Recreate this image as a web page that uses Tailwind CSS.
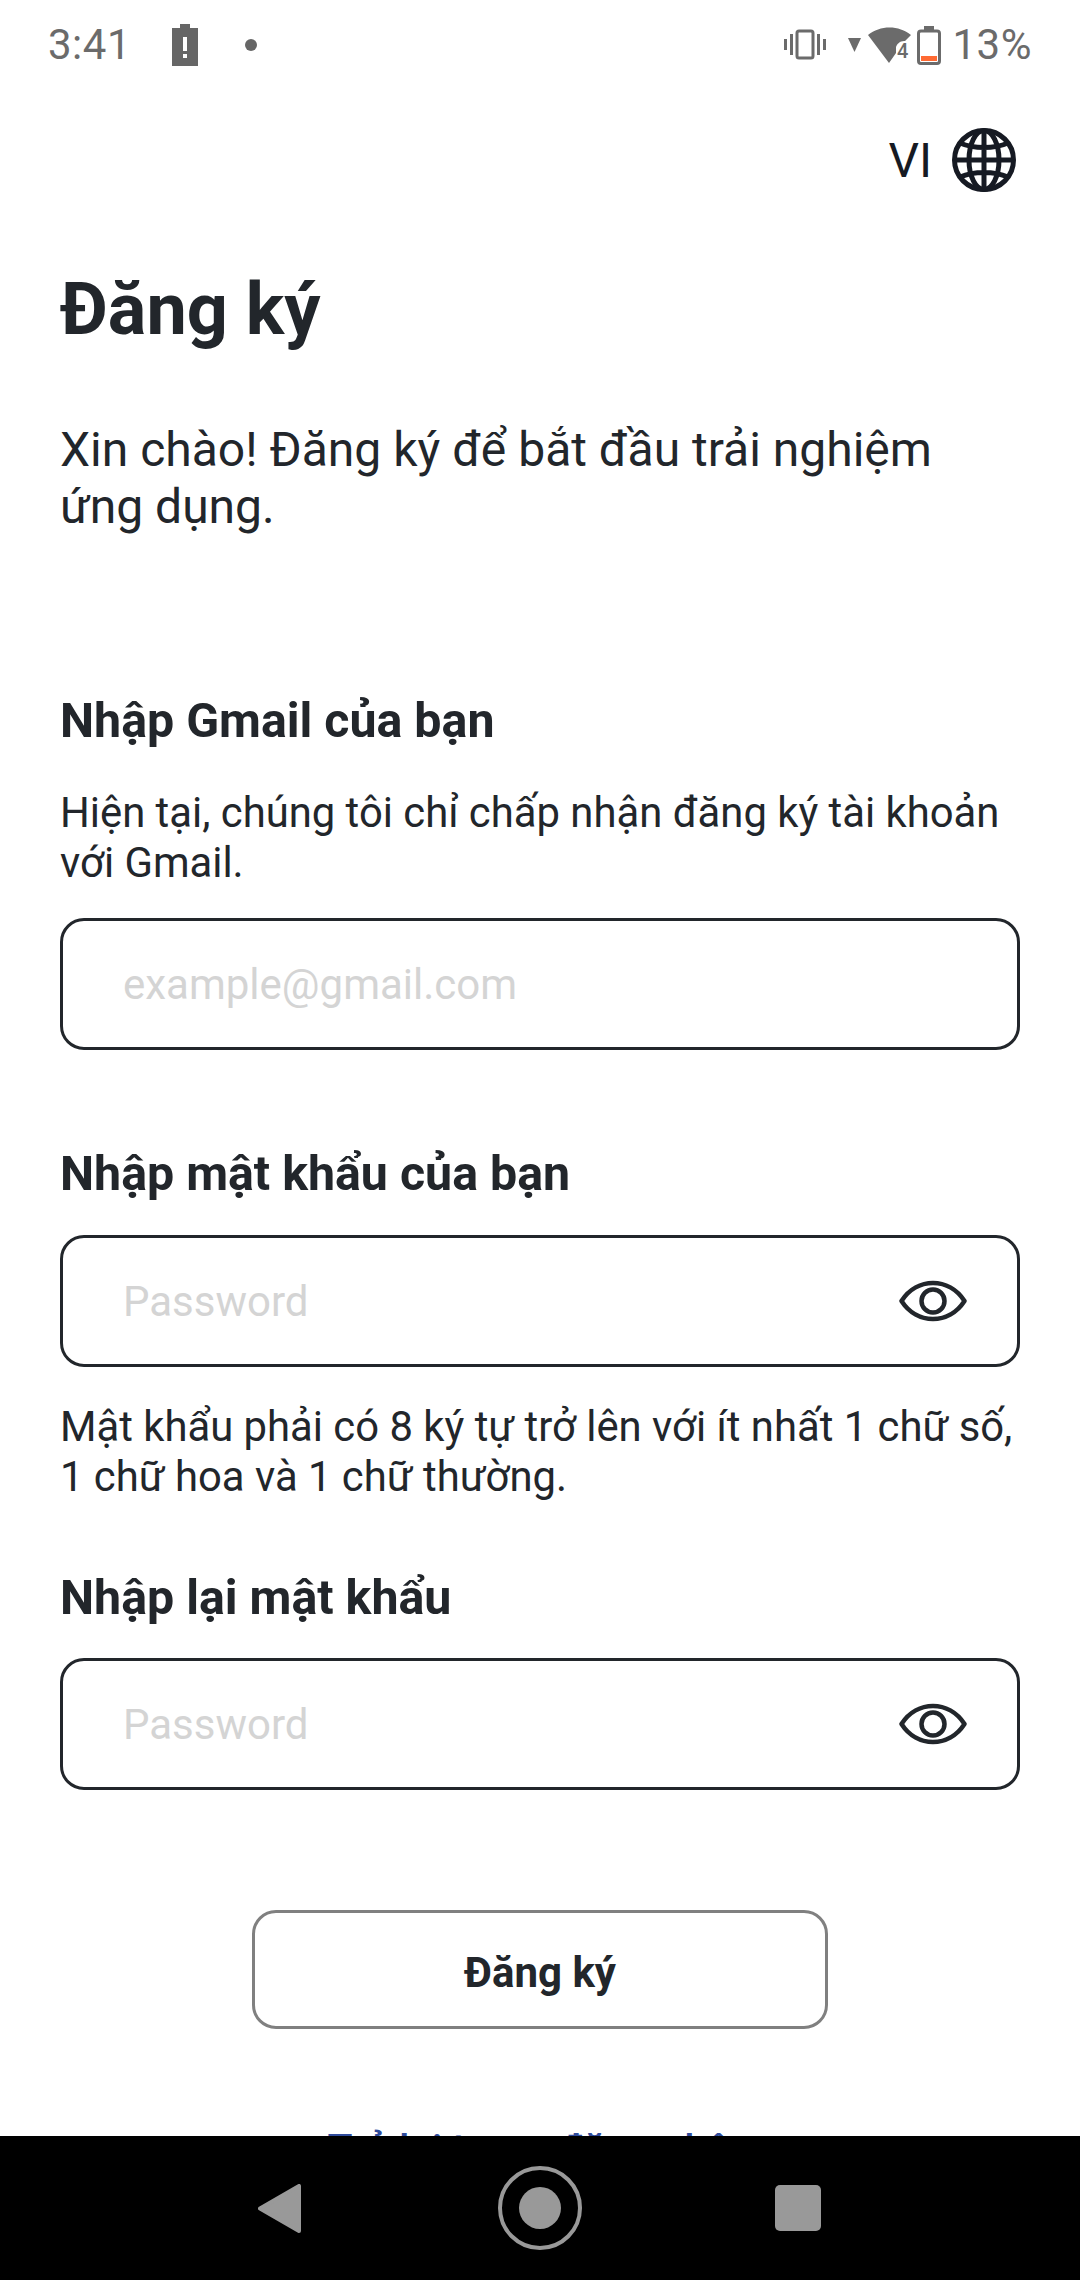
<!doctype html>
<html>
<head>
<meta charset="utf-8">
<title>Đăng ký</title>
<script src="https://cdn.jsdelivr.net/npm/@tailwindcss/browser@4"></script>
</head>
<body class="bg-white">
<div class="w-[1080px] h-[2280px] flex flex-col overflow-hidden font-['Roboto',sans-serif] text-[#22262b]">

  <!-- status bar -->
  <div class="h-[90px] shrink-0 flex items-center pl-[48px] pr-[48px] text-[#6b6b6b]">
    <span class="text-[42px] leading-none tracking-[0.5px]">3:41</span>
    <svg class="ml-[41px]" width="26" height="42" viewBox="0 0 26 42"><path fill="#666" fill-rule="evenodd" d="M8 0h10v4h8v38H0V4h8zM11 13v14h4V13zM11 30v4h4v-4z"/></svg>
    <span class="ml-[47px] w-[12px] h-[12px] rounded-full bg-[#666]"></span>
    <div class="ml-auto flex items-center">
      <svg width="42" height="32" viewBox="0 0 42 32"><rect x="13" y="2" width="16" height="27" rx="2" fill="none" stroke="#6b6b6b" stroke-width="3"/><path fill="#6b6b6b" d="M0 10h3v11H0zM6 5h3v21H6zM33 5h3v21h-3zM39 10h3v11h-3z"/></svg>
      <svg class="ml-[22px]" width="13" height="14" viewBox="0 0 13 14"><path fill="#6b6b6b" d="M0 0h13L6.500 14z"/></svg>
      <svg class="ml-[7px]" width="43" height="36" viewBox="0 0 43 36"><path fill="#6b6b6b" d="M0 8C12-2 31-2 43 8l-6 6h-1c-4 0-7 3-8 6v6l-7 10z"/><text x="29" y="31" font-size="20" font-weight="500" fill="#6b6b6b" font-family="Roboto">4</text></svg>
      <svg class="ml-[6px]" width="24" height="39" viewBox="0 0 24 39"><rect x="1.500" y="5" width="21" height="32.500" rx="2.500" fill="none" stroke="#6b6b6b" stroke-width="3"/><path fill="#6b6b6b" d="M7 0h10v4H7z"/><path fill="#ff6a33" d="M4 30h16v5H4z"/></svg>
      <span class="ml-[12px] text-[42px] leading-none tracking-[0.5px]">13%</span>
    </div>
  </div>

  <!-- page -->
  <div class="flex-1 min-h-0 overflow-hidden px-[60px]">
    <div class="mt-[35px] h-[70px] flex items-center justify-end pr-[4px]">
      <span class="mt-[2px] text-[48px] leading-none text-[#161a23]">VI</span>
      <svg class="ml-[20px]" width="64" height="64" viewBox="0 0 64 64" fill="none" stroke="#161a23" stroke-width="5">
        <circle cx="32" cy="32" r="29.500"/>
        <ellipse cx="32" cy="32" rx="15" ry="29.500"/>
        <path d="M32 2v60M2.500 32h59M8 15c14 6 34 6 48 0M8 49c14-6 34-6 48 0"/>
      </svg>
    </div>

    <h1 class="mt-[73px] text-[72px] leading-[84px] font-bold">Đăng ký</h1>
    <p class="mt-[69px] text-[48px] leading-[57px]">Xin chào! Đăng ký để bắt đầu trải nghiệm ứng dụng.</p>

    <h2 class="mt-[158px] text-[48.3px] leading-[56px] font-bold">Nhập Gmail của bạn</h2>
    <p class="mt-[39px] text-[41.8px] leading-[50px]">Hiện tại, chúng tôi chỉ chấp nhận đăng ký tài khoản với Gmail.</p>
    <div class="mt-[30px] h-[132px] border-[3px] border-[#22262b] rounded-[24px] flex items-center px-[60px] text-[42px] text-[#d4d4d4]">example@gmail.com</div>

    <h2 class="mt-[96px] text-[48.3px] leading-[56px] font-bold">Nhập mật khẩu của bạn</h2>
    <div class="mt-[33px] h-[132px] border-[3px] border-[#22262b] rounded-[24px] flex items-center justify-between pl-[60px] pr-[50px] text-[42px] text-[#d4d4d4]">
      <span>Password</span>
      <svg width="68" height="46" viewBox="0 0 68 46" fill="none" stroke="#22262b" stroke-width="4.500"><path d="M2.500 23C18 -1 50 -1 65.500 23C50 47 18 47 2.500 23Z" stroke-linejoin="round"/><circle cx="34" cy="23" r="11.500"/></svg>
    </div>
    <p class="mt-[35px] text-[41.8px] leading-[50px]">Mật khẩu phải có 8 ký tự trở lên với ít nhất 1 chữ số, 1 chữ hoa và 1 chữ thường.</p>

    <h2 class="mt-[68px] text-[48.3px] leading-[56px] font-bold">Nhập lại mật khẩu</h2>
    <div class="mt-[32px] h-[132px] border-[3px] border-[#22262b] rounded-[24px] flex items-center justify-between pl-[60px] pr-[50px] text-[42px] text-[#d4d4d4]">
      <span>Password</span>
      <svg width="68" height="46" viewBox="0 0 68 46" fill="none" stroke="#22262b" stroke-width="4.500"><path d="M2.500 23C18 -1 50 -1 65.500 23C50 47 18 47 2.500 23Z" stroke-linejoin="round"/><circle cx="34" cy="23" r="11.500"/></svg>
    </div>

    <div class="mt-[120px] flex justify-center">
      <button class="w-[576px] h-[119px] pt-[5px] border-[3px] border-[#808080] rounded-[24px] text-[42px] font-bold">Đăng ký</button>
    </div>
    <p class="mt-[95px] text-center text-[41px] leading-[50px] font-medium text-[#2f4b9b]">Trở lại trang đăng nhập</p>
  </div>

  <!-- nav bar -->
  <div class="h-[144px] shrink-0 bg-black flex items-center pl-[258px]">
    <svg width="43" height="49" viewBox="0 0 43 49"><path fill="#999" stroke="#999" stroke-width="4" stroke-linejoin="round" d="M41 2v45L2 24.500z"/></svg>
    <svg class="ml-[197px]" width="84" height="84" viewBox="0 0 84 84"><circle cx="42" cy="42" r="40" fill="none" stroke="#999" stroke-width="4"/><circle cx="42" cy="42" r="21" fill="#999"/></svg>
    <div class="ml-[193px] w-[46px] h-[46px] rounded-[5px] bg-[#999]"></div>
  </div>
</div>
</body>
</html>
